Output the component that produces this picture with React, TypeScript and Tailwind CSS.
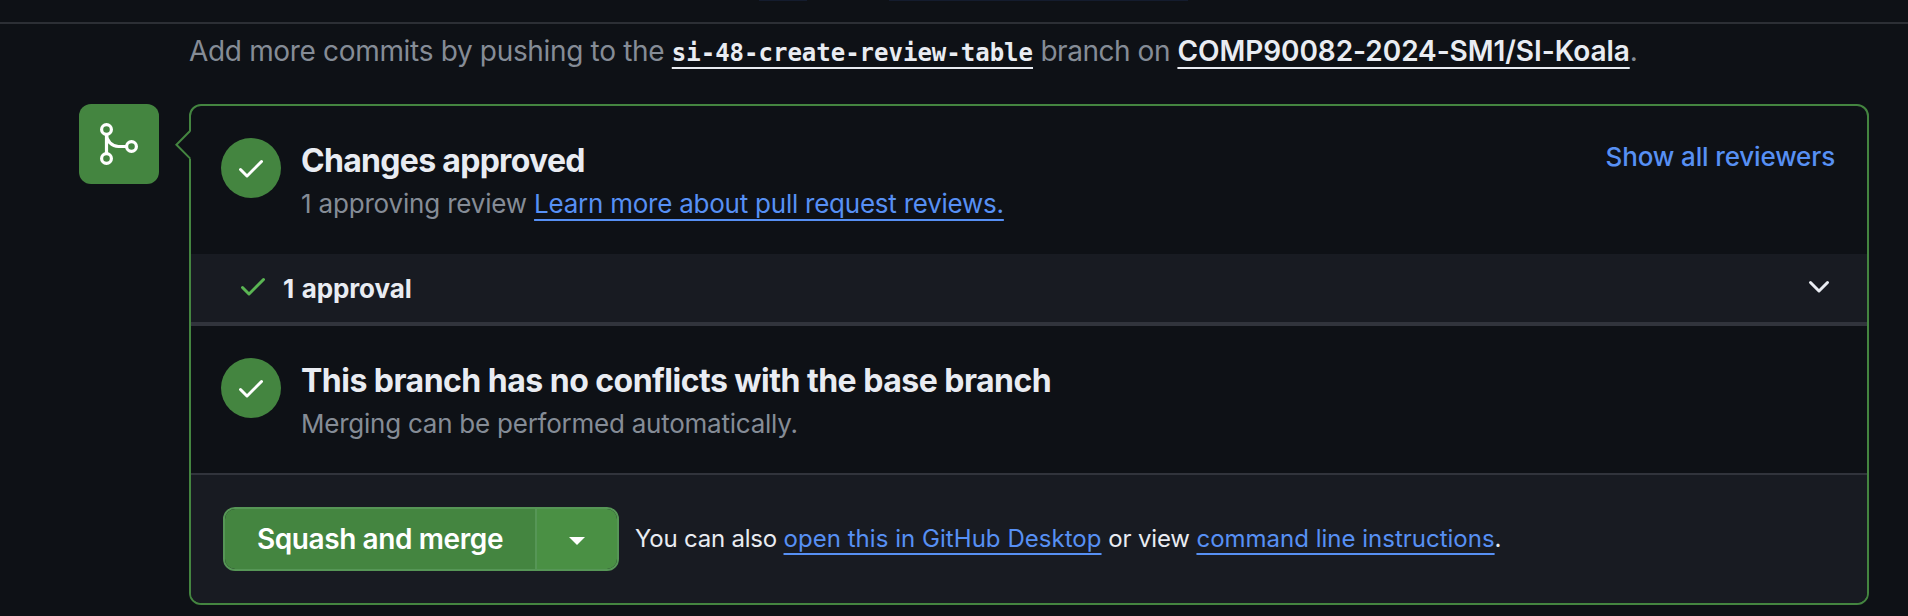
import type { ReactNode } from "react";

const CHECK =
  "M13.78 4.22a.75.75 0 0 1 0 1.06l-7.25 7.25a.75.75 0 0 1-1.06 0L2.22 9.28a.751.751 0 0 1 .018-1.042.751.751 0 0 1 1.042-.018L6 10.94l6.72-6.72a.75.75 0 0 1 1.06 0Z";
const CHEVRON_DOWN =
  "M12.78 5.22a.749.749 0 0 1 0 1.06l-4.25 4.25a.749.749 0 0 1-1.06 0L3.22 6.28a.749.749 0 1 1 1.06-1.06L8 8.94l3.72-3.72a.749.749 0 0 1 1.06 0Z";

function Icon({ d, className = "" }: { d: string; className?: string }) {
  return (
    <svg viewBox="0 0 16 16" fill="currentColor" className={`block size-8 shrink-0 ${className}`}>
      <path d={d} />
    </svg>
  );
}

function MergeIcon() {
  return (
    <svg viewBox="0 0 24 24" fill="none" stroke="currentColor" strokeWidth="1.6" className="size-12">
      <circle cx="5.75" cy="4.75" r="2.45" />
      <circle cx="5.75" cy="19.25" r="2.45" />
      <circle cx="18.25" cy="13.25" r="2.45" />
      <path d="M5.75 7.25v9.5M5.75 7.25a6 6 0 0 0 6 6h4" />
    </svg>
  );
}

function Link({ className = "", children }: { className?: string; children: ReactNode }) {
  return (
    <a
      href="#"
      className={`underline decoration-2 underline-offset-[6px] [text-decoration-skip-ink:none] ${className}`}
    >
      {children}
    </a>
  );
}

function StatusItem({
  title,
  titleClass,
  action,
  children,
}: {
  title: string;
  titleClass: string;
  action?: ReactNode;
  children: ReactNode;
}) {
  return (
    <div className="flex items-start pt-[30px] pr-8 pl-[30px]">
      <span className="mt-[2px] flex size-[60px] shrink-0 items-center justify-center rounded-full bg-[#448540] text-white">
        <Icon d={CHECK} />
      </span>
      <div className="ml-5 grow">
        <h3 className={`pt-px text-[32px] leading-[47px] font-bold text-[#e9ecf2] ${titleClass}`}>{title}</h3>
        <p className="text-[26px] leading-[39px] text-[#858c96]">{children}</p>
      </div>
      {action}
    </div>
  );
}

export default function App() {
  return (
    <div className="h-[616px] w-[1908px] overflow-hidden bg-[#0e1116] font-[Inter,sans-serif] whitespace-nowrap text-[#e9ecf2]">
      <div className="flex h-6 items-start border-b-2 border-[#2c2f35] pl-[759px]">
        <span className="h-px w-[48px] bg-[#141c2e]" />
        <span className="ml-[82px] h-px w-[299px] bg-[#141c2e]" />
      </div>

      <p className="pl-[189px] text-[28px] leading-[54px] text-[#858c96]">
        <span className="tracking-[-0.33px]">Add more commits by pushing to the </span>
        <Link className="font-['DejaVu_Sans_Mono',monospace] text-[24px] leading-none font-bold text-[#e9ecf2]">
          si-48-create-review-table
        </Link>
        <span className="tracking-[-0.46px]"> branch on </span>
        <Link className="font-semibold tracking-[-0.065px] text-[#e9ecf2]">COMP90082-2024-SM1/SI-Koala</Link>.
      </p>

      <div className="mt-[26px] flex items-start pl-[79px]">
        <div className="flex size-20 items-center justify-center rounded-xl bg-[#448540] text-white">
          <MergeIcon />
        </div>

        <section className="relative ml-[30px] h-[501px] w-[1680px] rounded-xl border-2 border-[#448540]">
          <svg viewBox="0 0 18 30" fill="none" className="absolute top-[24px] -left-[17px] h-[30px] w-[18px]">
            <path d="M18 0 L3 15 L18 30Z" fill="#0e1116" />
            <path d="M16 1 L2.4 14.7 L16 28.4" stroke="#448540" strokeWidth="2" />
          </svg>

          <div className="h-[148px]">
            <StatusItem
              title="Changes approved"
              titleClass="tracking-[-0.7px]"
              action={
                <a href="#" className="mt-px text-[26px] leading-[39px] font-medium tracking-[-0.15px] text-[#5790f4]">
                  Show all reviewers
                </a>
              }
            >
              <span className="tracking-[-0.18px]">1 approving review </span>
              <Link className="tracking-[-0.24px] text-[#5790f4]">Learn more about pull request reviews.</Link>
            </StatusItem>
          </div>

          <div className="flex h-[72px] items-center border-b-4 border-[#31343c] bg-[#181b22] pr-8 pl-[46px]">
            <Icon d={CHECK} className="-mt-1 text-[#5ab553]" />
            <span className="ml-[14px] grow text-[26px] leading-[39px] font-bold tracking-[-0.1px] [word-spacing:1.5px]">
              1 approval
            </span>
            <Icon d={CHEVRON_DOWN} className="-mt-0.5" />
          </div>

          <div className="h-[147px]">
            <StatusItem title="This branch has no conflicts with the base branch" titleClass="tracking-[-0.52px]">
              <span className="tracking-[-0.24px]">Merging can be performed automatically.</span>
            </StatusItem>
          </div>

          <div className="flex h-[130px] items-center rounded-b-[10px] border-t-2 border-[#31343c] bg-[#181b22] pl-8">
            <div className="flex h-16 w-[396px] overflow-hidden rounded-xl border-2 border-[#569656] text-white">
              <button className="w-[310px] bg-[#448540] text-[28px] font-semibold tracking-[-0.4px]">
                Squash and merge
              </button>
              <button className="flex grow items-center justify-center border-l-2 border-[#569656] bg-[#4a9044]">
                <svg viewBox="0 0 16 8" className="mt-[4px] h-2 w-4" fill="currentColor">
                  <path d="M0 0h16L8 8Z" />
                </svg>
              </button>
            </div>
            <p className="ml-4 text-[24px] leading-9">
              <span className="tracking-[-0.21px]">You can also </span>
              <Link className="tracking-[0.04px] text-[#5790f4]">open this in GitHub Desktop</Link>
              <span className="tracking-[-0.14px]"> or view </span>
              <Link className="text-[#5790f4]">command line instructions</Link>.
            </p>
          </div>
        </section>
      </div>
    </div>
  );
}
